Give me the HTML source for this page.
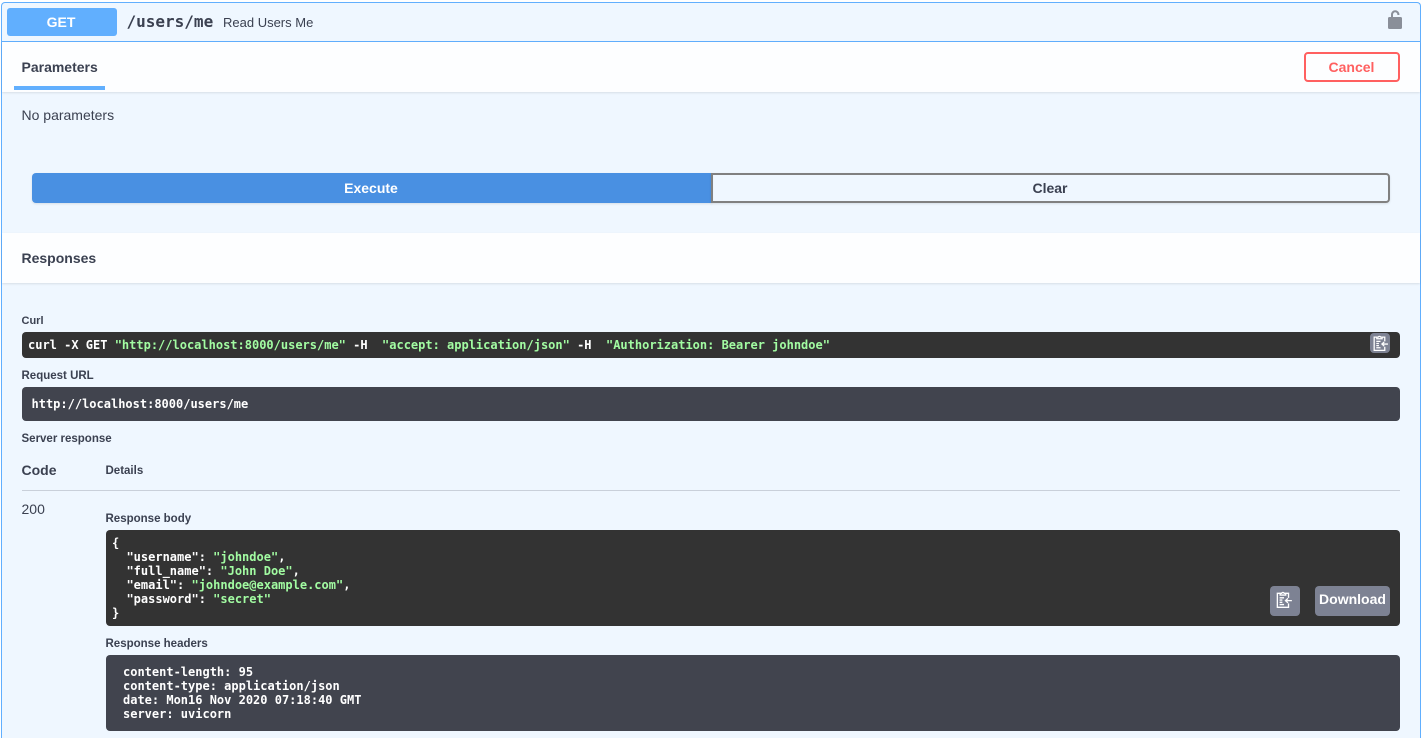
<!DOCTYPE html>
<html lang="en"><head><meta charset="utf-8"><title>Read Users Me</title>
<style>
html,body{margin:0;padding:0;background:#fff;width:1421px;height:738px;overflow:hidden}
#p{width:1421px;height:738px;position:relative;overflow:hidden;font-family:"Liberation Sans",sans-serif;color:#3b4151}
.a{position:absolute;white-space:pre}
.m{font-family:"DejaVu Sans Mono","Liberation Mono",monospace;font-weight:700;font-size:12px;line-height:14px;color:#fff}
.l{font-size:11.500px;font-weight:700;line-height:14px;color:#3b4151}
.g{color:#a2fca2}
.box{position:absolute;border-radius:4px}
.white{position:absolute;left:2px;width:1418px;box-shadow:0 1px 2px rgba(0,0,0,.1);background:rgba(255,255,255,.85)}
.btn{position:absolute;border-radius:4px;background:#7d8293}
</style></head>
<body>
<div id="p">
<div class="box" style="left:1px;top:2px;width:1418px;height:735px;border:1px solid #61affe;border-bottom:0;border-radius:4px 4px 0 0;background:#eff7ff"></div>
<div class="a" style="left:2px;top:41px;width:1418px;height:1px;background:#61affe"></div>

<div class="box" style="left:7px;top:8px;width:110px;height:28px;background:#61affe;border-radius:3px"></div>
<div class="a" style="left:6px;top:8px;width:110px;height:28px;line-height:28px;text-align:center;color:#fff;font-weight:700;font-size:14px">GET</div>
<div class="a" style="left:126.500px;top:12px;font-family:'DejaVu Sans Mono',monospace;font-weight:700;font-size:16px;line-height:20px;color:#3b4151">/users/me</div>
<div class="a" style="left:223px;top:15px;font-size:13px;line-height:15px;color:#3b4151">Read Users Me</div>
<svg class="a" style="left:1385px;top:10px" width="20" height="20" viewBox="0 0 20 20"><rect x="3" y="7" width="14" height="12" rx="1.500" fill="#8a8f99"/><path d="M7 8V4.500a3.200 3.200 0 0 1 6.400 0V5" fill="none" stroke="#8a8f99" stroke-width="2"/></svg>

<div class="white" style="top:42px;height:50px"></div>
<div class="a" style="left:21.500px;top:59px;font-size:14px;font-weight:700;line-height:16px;color:#3b4151">Parameters</div>
<div class="a" style="left:14px;top:86px;width:91px;height:4px;background:#61affe"></div>
<div class="box" style="left:1304px;top:52px;width:92px;height:26px;border:2px solid #ff6060;background:transparent"></div>
<div class="a" style="left:1303.500px;top:52px;width:96px;height:30px;line-height:30px;text-align:center;color:#ff6060;font-size:14px;font-weight:700">Cancel</div>
<div class="a" style="left:21.500px;top:107px;font-size:14px;line-height:16px;color:#3b4151">No parameters</div>

<div class="a" style="left:32px;top:173px;width:680px;height:30px;background:#4990e2;border-radius:4px 0 0 4px;box-shadow:0 1px 2px rgba(0,0,0,.1)"></div>
<div class="a" style="left:31px;top:173px;width:680px;height:30px;line-height:30px;text-align:center;color:#fff;font-size:14px;font-weight:700">Execute</div>
<div class="a" style="left:711px;top:173px;width:675px;height:26px;border:2px solid #808080;border-radius:0 4px 4px 0;background:transparent;box-shadow:0 1px 2px rgba(0,0,0,.1)"></div>
<div class="a" style="left:710.500px;top:173px;width:679px;height:30px;line-height:30px;text-align:center;color:#3b4151;font-size:14px;font-weight:700">Clear</div>

<div class="white" style="top:233px;height:50px"></div>
<div class="a" style="left:21.500px;top:250px;font-size:14px;font-weight:700;line-height:16px;color:#3b4151">Responses</div>

<div class="a l" style="left:21.500px;top:314px;font-size:11px">Curl</div>
<div class="box" style="left:22px;top:332px;width:1378px;height:26px;background:#333"></div>
<div class="a m" style="left:28px;top:338px">curl -X GET <span class="g">"http://localhost:8000/users/me"</span> -H  <span class="g">"accept: application/json"</span> -H  <span class="g">"Authorization: Bearer johndoe"</span></div>
<div class="btn" style="left:1370px;top:333px;width:20px;height:20px"></div>
<svg class="a" style="left:1371px;top:334px" width="18" height="18" viewBox="0 0 17 17" fill="none" stroke="#fff" stroke-width="1.200"><path d="M5.500 3H3v12.500h10V12M13 7V3h-2.500"/><path d="M5.500 4.500V3h1.300a1.300 1.300 0 0 1 2.400 0h1.300v1.500z"/><path d="M5 7h4M5 9h2.500M5 11h2.500M5 13h4M16 9.500h-6M12.500 7.500l-2.200 2 2.200 2"/></svg>

<div class="a l" style="left:21.500px;top:369px">Request URL</div>
<div class="box" style="left:22px;top:387px;width:1378px;height:34px;background:#41444e"></div>
<div class="a m" style="left:31.500px;top:397px">http://localhost:8000/users/me</div>
<div class="a l" style="left:21.500px;top:432px">Server response</div>

<div class="a" style="left:21.500px;top:462px;font-size:14px;font-weight:700;line-height:16px;color:#3b4151">Code</div>
<div class="a l" style="left:105.500px;top:464px">Details</div>
<div class="a" style="left:22px;top:490px;width:1378px;height:1px;background:#c9d0da"></div>
<div class="a" style="left:21.500px;top:501px;font-size:14px;line-height:16px;color:#3b4151">200</div>

<div class="a l" style="left:105.500px;top:512px">Response body</div>
<div class="box" style="left:106px;top:530px;width:1294px;height:96px;background:#333"></div>
<div class="a m" style="left:112px;top:536px">{
  "username": <span class="g">"johndoe"</span>,
  "full_name": <span class="g">"John Doe"</span>,
  "email": <span class="g">"johndoe@example.com"</span>,
  "password": <span class="g">"secret"</span>
}</div>
<div class="btn" style="left:1270px;top:586px;width:30px;height:30px"></div>
<svg class="a" style="left:1274px;top:590px" width="19" height="19" viewBox="0 0 17 17" fill="none" stroke="#fff" stroke-width="1.200"><path d="M5.500 3H3v12.500h10V12M13 7V3h-2.500"/><path d="M5.500 4.500V3h1.300a1.300 1.300 0 0 1 2.400 0h1.300v1.500z"/><path d="M5 7h4M5 9h2.500M5 11h2.500M5 13h4M16 9.500h-6M12.500 7.500l-2.200 2 2.200 2"/></svg>
<div class="btn" style="left:1315px;top:586px;width:75px;height:30px"></div>
<div class="a" style="left:1315px;top:586px;width:75px;height:26px;line-height:26px;text-align:center;color:#fff;font-size:14px;font-weight:700">Download</div>

<div class="a l" style="left:105.500px;top:637px">Response headers</div>
<div class="box" style="left:106px;top:655px;width:1294px;height:76px;background:#41444e"></div>
<div class="a m" style="left:123px;top:665px">content-length: 95
content-type: application/json
date: Mon16 Nov 2020 07:18:40 GMT
server: uvicorn</div>
</div>
</body></html>
